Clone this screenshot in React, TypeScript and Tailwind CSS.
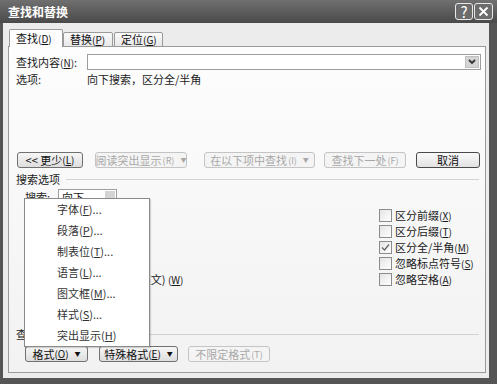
const FONT = { fontFamily: '"Noto Sans CJK SC", "Liberation Sans", sans-serif' };

function Key({ k }: { k: string }) {
  return (
    <span className="text-[10px]">
      (<span className="underline">{k}</span>)
    </span>
  );
}

function Btn({ children, w, disabled = false, def = false, className = '' }: { children: React.ReactNode; w: string; disabled?: boolean; def?: boolean; className?: string }) {
  return (
    <div
      className={`${w} ${className} h-[16px] shrink-0 rounded-[3px] border flex items-center justify-center whitespace-nowrap text-[11px] leading-none ${
        disabled
          ? 'border-[#c4c4c4] bg-[#f4f4f4] text-[#a8a8a8]'
          : def
          ? 'border-[#4a4a4a] bg-gradient-to-b from-[#fafafa] to-[#e2e2e2] text-[#111]'
          : 'border-[#707070] bg-gradient-to-b from-[#f6f6f6] to-[#dedede] text-[#111]'
      }`}
    >
      {children}
    </div>
  );
}

function Caret() {
  return <span className="ml-[6px] text-[6px] leading-none">▼</span>;
}

function Check({ label, checked = false, tight = false }: { label: React.ReactNode; checked?: boolean; tight?: boolean }) {
  return (
    <div className="h-[16px] flex items-center whitespace-nowrap">
      <div className="w-[13px] h-[13px] shrink-0 border border-[#8c8c8c] bg-gradient-to-br from-[#e4e4e4] to-[#ffffff] flex items-center justify-center">
        {checked && (
          <svg width="9" height="9" viewBox="0 0 9 9">
            <path d="M1 4.5 L3.5 7 L8 1.5" fill="none" stroke="#666" strokeWidth="1.3" />
          </svg>
        )}
      </div>
      <span className={`${tight ? 'ml-0' : 'ml-[3px]'} text-[11px] leading-none text-[#1a1a1a]`}>{label}</span>
    </div>
  );
}

function SectionTitle({ text }: { text: string }) {
  return (
    <div className="h-[14px] flex items-center">
      <span className="text-[11px] leading-none text-[#1a1a1a]">{text}</span>
      <div className="flex-1 ml-[6px] mr-[6px] border-t border-[#d2d2d2]" />
    </div>
  );
}

const menuItems: { t: string; k: string; dots: boolean }[] = [
  { t: '字体', k: 'F', dots: true },
  { t: '段落', k: 'P', dots: true },
  { t: '制表位', k: 'T', dots: true },
  { t: '语言', k: 'L', dots: true },
  { t: '图文框', k: 'M', dots: true },
  { t: '样式', k: 'S', dots: true },
  { t: '突出显示', k: 'H', dots: false },
];

export default function App() {
  return (
    <div className="w-[497px] h-[384px] bg-[#555555] flex flex-col overflow-hidden select-none" style={FONT}>
      {/* title bar */}
      <div className="h-[23px] shrink-0 flex items-center justify-between pl-[8px] pr-[4px] bg-gradient-to-b from-[#707070] to-[#4a4a4a]">
        <span className="text-[12px] font-bold leading-none text-white">查找和替换</span>
        <div className="flex gap-[1px]">
          <div className="w-[18px] h-[17px] rounded-[3px] border border-[#e8e8e8] bg-[#6c6c6c] flex items-center justify-center text-white text-[15px] leading-none">
            ?
          </div>
          <div className="w-[19px] h-[17px] rounded-[3px] border border-[#e8e8e8] bg-[#6c6c6c] flex items-center justify-center">
            <svg width="11" height="11" viewBox="0 0 11 11">
              <path d="M1.5 1.5 L9.5 9.5 M9.5 1.5 L1.5 9.5" stroke="#fff" strokeWidth="1.8" />
            </svg>
          </div>
        </div>
      </div>

      {/* body */}
      <div className="flex-1 ml-[3px] mr-[8px] mb-[6px] bg-[#ececec] pt-[7px] pl-[5px] pr-[3px] pb-[5px] flex flex-col">
        {/* tabs */}
        <div className="h-[17px] flex items-end pl-[1px] relative z-10 -mb-px">
          <div className="w-[54px] h-[18px] border border-b-0 border-[#9a9a9a] rounded-t-[2px] bg-[#fdfdfd] flex items-center pl-[6px] text-[11px] leading-none text-[#111]">
            查找<Key k="D" />
          </div>
          <div className="w-[50px] h-[15px] border border-[#9a9a9a] rounded-t-[2px] bg-gradient-to-b from-[#fafafa] to-[#e8e8e8] flex items-center pl-[6px] text-[11px] leading-none text-[#111]">
            替换<Key k="P" />
          </div>
          <div className="w-[49px] h-[15px] ml-[1px] border border-[#9a9a9a] rounded-t-[2px] bg-gradient-to-b from-[#fafafa] to-[#e8e8e8] flex items-center pl-[6px] text-[11px] leading-none text-[#111]">
            定位<Key k="G" />
          </div>
        </div>

        {/* panel */}
        <div className="flex-1 relative border border-[#9a9a9a] bg-gradient-to-b from-[#fdfdfd] to-[#f2f2f2] pt-[7px] pl-[7px] flex flex-col text-[#1a1a1a]">
          <div className="h-[16px] flex items-center">
            <span className="w-[71px] text-[11px] leading-none whitespace-nowrap">
              查找内容<Key k="N" />:
            </span>
            <div className="flex-1 mr-[4px] h-[16px] border border-[#9e9e9e] bg-white flex items-center justify-end pr-[1px]">
              <div className="w-[14px] h-[12px] bg-[#d4d4d4] border border-[#c0c0c0] flex items-center justify-center">
                <svg width="8" height="6" viewBox="0 0 8 6">
                  <path d="M1 1 L4 4 L7 1" fill="none" stroke="#333" strokeWidth="1.8" />
                </svg>
              </div>
            </div>
          </div>
          <div className="h-[16px] mt-[1px] flex items-center text-[11px] leading-none">
            <span className="w-[71px]">选项:</span>
            <span>向下搜索，区分全/半角</span>
          </div>

          {/* buttons row */}
          <div className="mt-[65px] flex items-center">
            <Btn w="w-[66px]" className="ml-[1px]">
              &lt;&lt; 更少<Key k="L" />
            </Btn>
            <Btn w="w-[92px]" className="ml-[12px]" disabled>
              阅读突出显示<span className="text-[9px] ml-[1px]">(R)</span>
              <Caret />
            </Btn>
            <Btn w="w-[111px]" className="ml-[17px]" disabled>
              在以下项中查找<span className="text-[9px] ml-[1px]">(I)</span>
              <Caret />
            </Btn>
            <Btn w="w-[82px]" className="ml-[9px]" disabled>
              查找下一处<span className="text-[9px] ml-[1px]">(F)</span>
            </Btn>
            <Btn w="w-[64px]" className="ml-[10px]" def>
              取消
            </Btn>
          </div>

          <div className="mt-[4px]">
            <SectionTitle text="搜索选项" />
          </div>

          <div className="mt-[3px] h-[16px] flex items-center pl-[9px]">
            <span className="w-[33px] text-[11px] leading-none">搜索:</span>
            <div className="w-[59px] h-[16px] border border-[#9e9e9e] bg-white flex items-center justify-between pl-[3px] pr-[1px]">
              <span className="text-[11px] leading-none">向下</span>
              <div className="w-[10px] h-[12px] bg-[#d4d4d4]" />
            </div>
          </div>

          {/* checkboxes */}
          <div className="mt-[2px] flex pl-[8px]">
            <div className="w-[355px] flex flex-col">
              <Check tight label={<>区分大小写<Key k="H" /></>} />
              <Check tight label={<>全字匹配<Key k="Y" /></>} />
              <Check tight label={<>使用通配符<Key k="U" /></>} />
              <Check tight label={<>同音(英文)<Key k="K" /></>} />
              <Check tight label={<>查找单词的所有形式(英文) <Key k="W" /></>} />
            </div>
            <div className="flex flex-col">
              <Check label={<>区分前缀<Key k="X" /></>} />
              <Check label={<>区分后缀<Key k="T" /></>} />
              <Check label={<>区分全/半角<Key k="M" /></>} checked />
              <Check label={<>忽略标点符号<Key k="S" /></>} />
              <Check label={<>忽略空格<Key k="A" /></>} />
            </div>
          </div>

          <div className="mt-[40px]">
            <SectionTitle text="查找" />
          </div>

          <div className="mt-[5px] flex items-center pl-[9px]">
            <Btn w="w-[63px]">
              格式<Key k="O" />
              <Caret />
            </Btn>
            <Btn w="w-[79px]" className="ml-[11px]">
              特殊格式<Key k="E" />
              <Caret />
            </Btn>
            <Btn w="w-[82px]" className="ml-[10px]" disabled>
              不限定格式<span className="text-[9px] ml-[1px]">(T)</span>
            </Btn>
          </div>

          {/* popup menu */}
          <div className="absolute left-[15px] top-[151px] w-[126px] bg-white border border-[#8a8a8a] shadow-[1px_1px_1px_rgba(0,0,0,0.15)] flex flex-col">
            {menuItems.map((m) => (
              <div key={m.k} className="h-[21px] flex items-center pl-[32px] text-[11px] leading-none text-[#333]">
                {m.t}(<span className="underline">{m.k}</span>){m.dots ? '...' : ''}
              </div>
            ))}
          </div>
        </div>
      </div>
    </div>
  );
}
